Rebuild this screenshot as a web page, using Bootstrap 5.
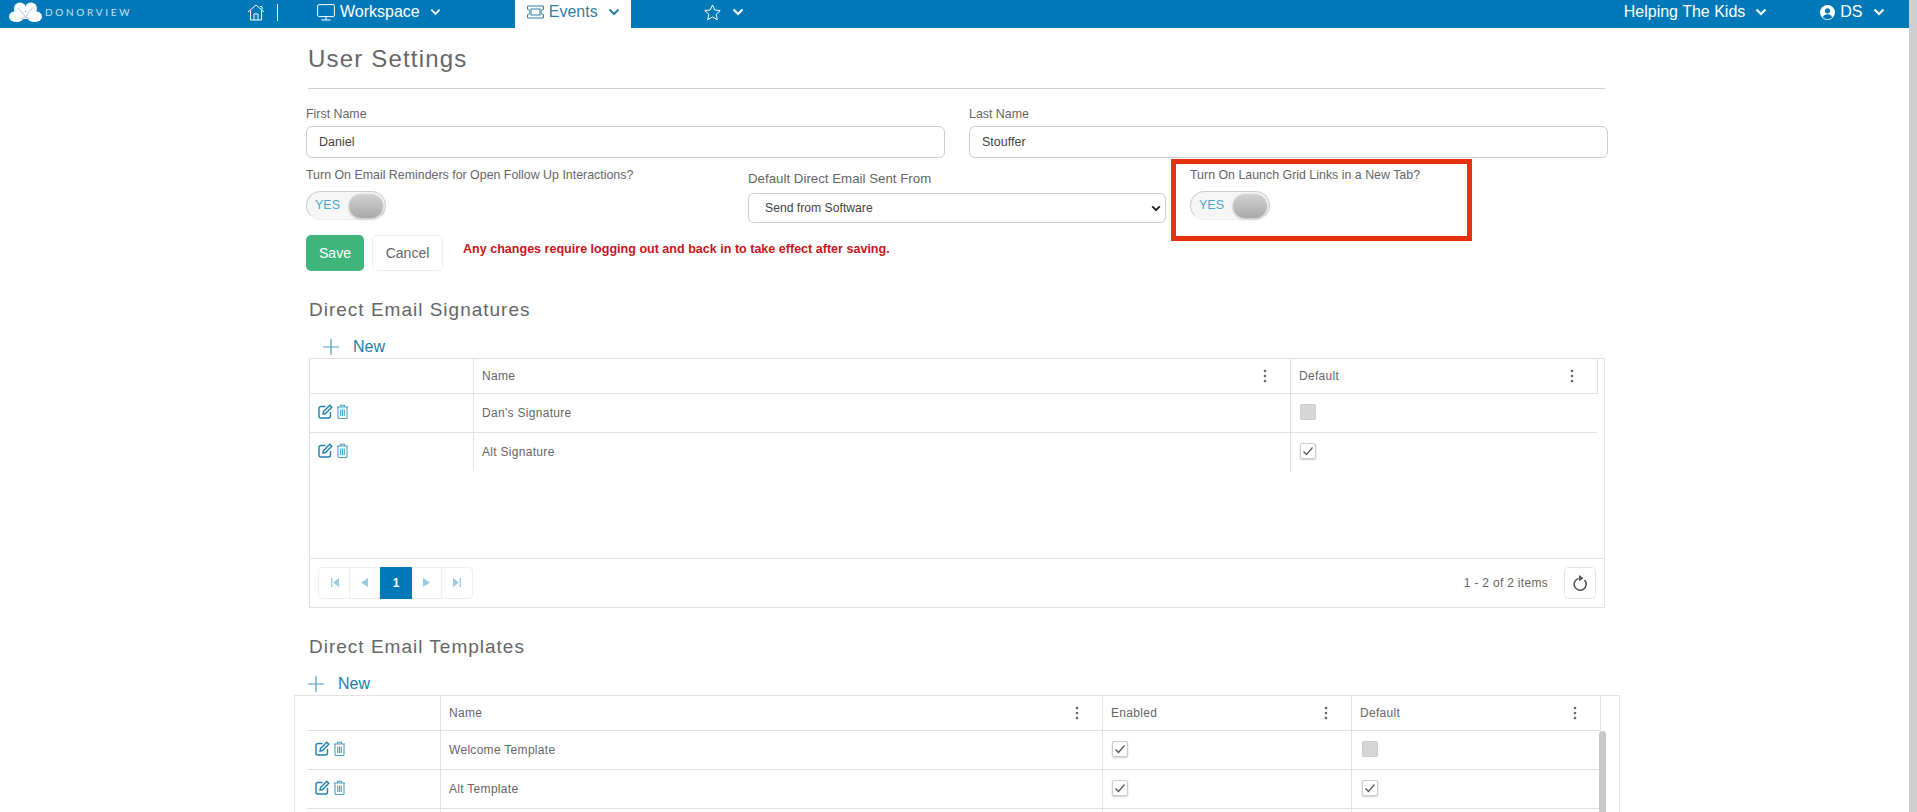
<!DOCTYPE html>
<html lang="en">

<head>
    <meta charset="UTF-8">
    <meta name="viewport" content="width=device-width, initial-scale=1.0">
    <title>User Settings</title>
    <link href="https://cdn.jsdelivr.net/npm/bootstrap@5.3.0/dist/css/bootstrap.min.css" rel="stylesheet">
    <style>
        html, body { height: 812px; overflow: hidden; }
        body { font-family: "Liberation Sans", Arial, sans-serif; color: #666; background: #fff; font-size: 12px; }
        .dv-wrap { width: 1909px; flex: none; }
        .dv-pagebar { width: 8px; height: 812px; background: #cfcfcf; flex: none; }

        /* top bar */
        .dv-bar { height: 28px; padding-bottom: 4px; background: #0179b8; color: #fff; font-size: 16px; white-space: nowrap; }
        .dv-bar svg { display: block; flex: none; }
        .dv-logo { margin-left: 9px; width: 238px; flex: none; }
        .dv-logo-text { font-family: Lato, sans-serif; font-size: 10px; letter-spacing: 2.7px; color: #c4e2f1; margin-left: 3px; }
        .dv-sep { width: 1px; height: 17px; background: #fff; margin-left: 12px; }
        .dv-item { height: 28px; gap: 5px; align-self: flex-start; padding-bottom: 4px; flex: none; }
        .dv-workspace { margin-left: 39px; margin-right: 74px; }
        .dv-events { background: #fff; color: #2f7fa8; width: 116px; padding-left: 12px; }
        .dv-star { margin-left: 73px; margin-right: 880px; gap: 11px; }
        .dv-kids { margin-right: 53px; }
        .dv-chev { margin-left: 5px; }

        /* page */
        .dv-page { margin-left: 306px; width: 1303px; }
        .dv-title { margin-left: 2px; width: 1297px; height: 61px; padding-top: 3px; border-bottom: 1px solid #d0d0d0; font-size: 24px; letter-spacing: 1.180px; font-weight: 400; color: #666; margin-bottom: 0; }
        .dv-section { margin-left: 3px; font-size: 19px; line-height: 24px; letter-spacing: 1px; color: #666; font-weight: 400; margin-bottom: 0; }
        .dv-label { font-size: 12.4px; line-height: 16px; color: #666; margin: 0; display: block; }
        .dv-names { display: grid; grid-template-columns: 639px 639px; gap: 24px; padding-top: 17px; }
        .dv-names .dv-label { margin-bottom: 4px; }
        .dv-input { height: 32px; font-size: 12.5px; color: #444; border: 1px solid #ccc; border-radius: 6px; padding: 0 12px; }
        .dv-opts { display: grid; grid-template-columns: 442px 442px 1fr; height: 77px; }
        .dv-opt1 { padding-top: 9px; }
        .dv-opt2 { padding-top: 13px; width: 418px; }
        .dv-opt2 .dv-label { margin-bottom: 6px; font-size: 13.3px; }
        .dv-select { height: 30px; font-size: 12.2px; color: #444; border: 1px solid #ccc; border-radius: 6px; padding: 0 30px 0 16px; background-image: url("data:image/svg+xml,%3csvg xmlns='http://www.w3.org/2000/svg' viewBox='0 0 12 8'%3e%3cpath d='M1.500 1.500 6 6l4.500-4.500' fill='none' stroke='%23222' stroke-width='2.400'/%3e%3c/svg%3e"); background-position: right 4px center; background-size: 10px 7px; }
        .dv-opt3 { position: relative; padding-top: 9px; }
        .dv-redbox { position: absolute; left: -19px; top: 1px; width: 301px; height: 82px; border: 5px solid #e5330f; pointer-events: none; }
        .dv-toggle { width: 80px; height: 29px; margin-top: 8px; border-radius: 15px; border: 1px solid #ccc; border-bottom-color: #eee; background: #f6f6f6; color: #45a9d0; font-size: 12.5px; padding: 0 2px 0 8px; }
        .dv-knob { width: 34px; height: 24px; border-radius: 12px; background: linear-gradient(#d2d2d2, #a9a9a9); box-shadow: 0 1px 3px rgba(0,0,0,.25); }
        .dv-actions { height: 36px; gap: 8px; }
        .dv-save { width: 58px; height: 36px; background: #3fb57b; color: #fff; border: 0; border-radius: 5px; font-size: 14px; padding: 0; }
        .dv-cancel { width: 71px; height: 36px; background: #fff; color: #666; border: 1px solid #eee; border-radius: 5px; font-size: 14px; padding: 0; }
        .dv-warn { color: #c8141b; font-weight: 700; font-size: 12.55px; line-height: 16px; margin: 6px 0 0 12px; }
        .dv-new { height: 24px; color: #1a7ea8; font-size: 16px; gap: 14px; margin-bottom: -1px; }
        .dv-new1 { margin-left: 17px; margin-top: 13px; }
        .dv-new2 { margin-left: 2px; margin-top: 13px; }
        .dv-mt1 { margin-top: 27px; }
        .dv-mt2 { margin-top: 27px; }

        /* grids */
        .dv-grid { border: 1px solid #e2e2e2; position: relative; }
        .dv-grid1 { margin-left: 3px; width: 1296px; height: 250px; }
        .dv-grid2 { margin-left: -12px; width: 1326px; height: 200px; padding-left: 12px; }
        .dv-tbl { table-layout: fixed; border-collapse: separate; border-spacing: 0; letter-spacing: .3px; }
        .dv-tbl th, .dv-tbl td { border-right: 1px solid #e2e2e2; border-bottom: 1px solid #e2e2e2; font-weight: 400; padding: 0 0 0 8px; color: #666; }
        .dv-tbl th { height: 35px; }
        .dv-tbl td { height: 39px; }
        .dv-tbl td:last-child { border-right: 0; }
        .dv-tbl .dv-last td { border-bottom: 0; height: 38px; }
        .dv-body1 { height: 164px; }
        .dv-tg1 { width: 1288px; }
        .dv-tb1 { width: 1287px; }
        .dv-tg2 { width: 1294px; }
        .dv-c1 { width: 164px; }
        .dv-c2 { width: 817px; }
        .dv-c3 { width: 307px; }
        .dv-tb1 .dv-c3 { width: 306px; }
        .dv-d1 { width: 134px; }
        .dv-d2 { width: 662px; }
        .dv-d3 { width: 249px; }
        .dv-d4 { width: 249px; }
        .dv-dots { margin-right: 23px; }
        .dv-acts { gap: 3px; margin-bottom: 3px; }
        .dv-check { width: 16px; height: 16px; border: 1px solid #ccc; border-radius: 2px; background: #fff; box-shadow: 0 1px 2px rgba(0,0,0,.2); margin: 0 0 3px 1px; }
        .dv-d4 .dv-check { margin-left: 2px; }
        .dv-check.dv-off { background: #d6d6d6; box-shadow: none; }
        .dv-foot { height: 48px; border-top: 1px solid #e2e2e2; padding: 8px; }
        .dv-pager { height: 32px; border: 1px solid #eee; border-radius: 4px; }
        .dv-pg { width: 30px; height: 32px; border-right: 1px solid #eee; }
        .dv-pg:first-child { width: 31px; }
        .dv-pg:last-child { border-right: 0; }
        .dv-pg.dv-on { background: #0179b8; color: #fff; font-weight: 700; width: 32px; border: 0; }
        .dv-count { font-size: 12px; letter-spacing: .3px; margin-right: 16px; }
        .dv-refresh { width: 32px; height: 32px; border: 1px solid #e6e6e6; border-radius: 4px; }
        .dv-scroll { position: absolute; left: 1304px; top: 35px; width: 7px; height: 170px; background: #c8c8c8; border-radius: 4px 4px 0 0; }
    </style>
</head>

<body class="d-flex">
    <svg width="0" height="0" class="position-absolute">
        <symbol id="i-chev" viewBox="0 0 12 8"><path d="M1.500 1.500 6 6l4.500-4.500" fill="none" stroke="currentColor" stroke-width="2"/></symbol>
        <symbol id="i-edit" viewBox="0 0 15 15"><path d="M7.500 2.500H3A2 2 0 0 0 1 4.500v7.500a2 2 0 0 0 2 2h7.500a2 2 0 0 0 2-2V8" fill="none" stroke="#1f82ad" stroke-width="1.400"/><path d="M5.500 7.500 11.800 1.200l2 2L7.500 9.500l-2.500.5z" fill="none" stroke="#1f82ad" stroke-width="1.400"/></symbol>
        <symbol id="i-trash" viewBox="0 0 13 15"><path d="M1 3h11M4.500 3V1.300h4V3M2 3v10.500a1 1 0 0 0 1 1h7a1 1 0 0 0 1-1V3M4.700 5.500v6.500M6.500 5.500v6.500M8.300 5.500v6.500" fill="none" stroke="#4d9fc3" stroke-width="1.100"/></symbol>
        <symbol id="i-plus" viewBox="0 0 16 16"><path d="M8 0v16M0 8h16" stroke="#4a9fc0" stroke-width="1.200"/></symbol>
        <symbol id="i-dots" viewBox="0 0 4 14"><circle cx="2" cy="2" r="1.300" fill="#666"/><circle cx="2" cy="7" r="1.300" fill="#666"/><circle cx="2" cy="12" r="1.300" fill="#666"/></symbol>
        <symbol id="i-tick" viewBox="0 0 14 14"><path d="M2.500 7.500 5.500 10.500 11.500 3.500" fill="none" stroke="#555" stroke-width="1.200"/></symbol>
    </svg>

    <div class="dv-wrap">
        <nav class="dv-bar d-flex align-items-center">
            <div class="dv-logo d-flex align-items-center">
                <svg width="33" height="20" viewBox="0 0 33 20">
                    <circle cx="11" cy="6.500" r="6" fill="#fff"/><circle cx="22" cy="6.500" r="6" fill="#fff"/>
                    <ellipse cx="7.500" cy="14.500" rx="7.500" ry="5.500" fill="#fff"/><ellipse cx="25.500" cy="14.500" rx="7.500" ry="5.500" fill="#fff"/>
                    <path d="M11 10h11v7H11z" fill="#fff"/>
                    <path d="M9 5.500 16.500 15 24 5.500M12 17l4.500-2 4.500 2" fill="none" stroke="#b9c9d2" stroke-width="1"/>
                </svg>
                <span class="dv-logo-text">DONORVIEW</span>
            </div>
            <svg width="18" height="18" viewBox="0 0 18 18"><path d="M1 9 9 2l8 7M3.500 7.500V17h11V7.500M7 17v-6h4v6M13 3.500h2v3" fill="none" stroke="#fff" stroke-width="1"/></svg>
            <span class="dv-sep"></span>
            <div class="dv-item dv-workspace d-flex align-items-center">
                <svg width="18" height="17" viewBox="0 0 18 17"><rect x=".6" y=".6" width="16.800" height="12" rx="1.500" fill="none" stroke="#fff" stroke-width="1"/><path d="M9 12.600v3M4.500 16h9" stroke="#fff" stroke-width="1"/></svg>
                <span>Workspace</span>
                <svg class="dv-chev" width="11" height="8"><use href="#i-chev"/></svg>
            </div>
            <div class="dv-item dv-events d-flex align-items-center">
                <svg width="17" height="14" viewBox="0 0 17 14"><path d="M.6 1h15.800v3.500a2.500 2.500 0 0 0 0 5V13H.6V9.500a2.500 2.500 0 0 0 0-5z" fill="none" stroke="#2f7fa8" stroke-width="1"/><rect x="4" y="4" width="9" height="6" fill="none" stroke="#2f7fa8" stroke-width="1"/></svg>
                <span>Events</span>
                <svg class="dv-chev" width="12" height="8"><use href="#i-chev"/></svg>
            </div>
            <div class="dv-item dv-star d-flex align-items-center">
                <svg width="17" height="17" viewBox="0 0 17 17"><path d="M8.500 1l2.300 5 5.400.6-4 3.700 1.100 5.400-4.800-2.700-4.800 2.700 1.100-5.400-4-3.700 5.400-.6z" fill="none" stroke="#fff" stroke-width="1"/></svg>
                <svg width="12" height="8"><use href="#i-chev"/></svg>
            </div>
            <div class="dv-item dv-kids d-flex align-items-center">
                <span>Helping The Kids</span>
                <svg class="dv-chev" width="12" height="8"><use href="#i-chev"/></svg>
            </div>
            <div class="dv-item d-flex align-items-center">
                <svg width="15" height="15" viewBox="0 0 15 15"><circle cx="7.500" cy="7.500" r="7.500" fill="#fff"/><circle cx="7.500" cy="5.800" r="2.600" fill="#0179b8"/><path d="M2.800 12.500c.8-2.200 2.500-3.200 4.700-3.200s3.900 1 4.700 3.200a7 7 0 0 1-9.400 0z" fill="#0179b8"/></svg>
                <span>DS</span>
                <svg class="dv-chev" width="12" height="8"><use href="#i-chev"/></svg>
            </div>
        </nav>

        <main class="dv-page">
            <h1 class="dv-title d-flex align-items-center">User Settings</h1>

            <div class="dv-names">
                <div>
                    <label class="dv-label" for="firstName">First Name</label>
                    <input id="firstName" class="form-control dv-input" value="Daniel">
                </div>
                <div>
                    <label class="dv-label" for="lastName">Last Name</label>
                    <input id="lastName" class="form-control dv-input" value="Stouffer">
                </div>
            </div>

            <div class="dv-opts">
                <div class="dv-opt1">
                    <span class="dv-label">Turn On Email Reminders for Open Follow Up Interactions?</span>
                    <div class="dv-toggle d-flex align-items-center justify-content-between"><span>YES</span><span class="dv-knob"></span></div>
                </div>
                <div class="dv-opt2">
                    <label class="dv-label" for="sentFrom">Default Direct Email Sent From</label>
                    <select id="sentFrom" class="form-select dv-select">
                        <option>Send from Software</option>
                    </select>
                </div>
                <div class="dv-opt3">
                    <span class="dv-label">Turn On Launch Grid Links in a New Tab?</span>
                    <div class="dv-toggle d-flex align-items-center justify-content-between"><span>YES</span><span class="dv-knob"></span></div>
                    <div class="dv-redbox"></div>
                </div>
            </div>

            <div class="dv-actions d-flex align-items-start">
                <button class="btn dv-save">Save</button>
                <button class="btn dv-cancel">Cancel</button>
                <span class="dv-warn">Any changes require logging out and back in to take effect after saving.</span>
            </div>

            <h2 class="dv-section dv-mt1">Direct Email Signatures</h2>
            <div class="dv-new dv-new1 d-flex align-items-center">
                <svg width="16" height="16"><use href="#i-plus"/></svg><span>New</span>
            </div>

            <div class="dv-grid dv-grid1">
                <table class="dv-tbl dv-tg1">
                    <thead>
                        <tr>
                            <th class="dv-c1"></th>
                            <th class="dv-c2"><div class="d-flex justify-content-between align-items-center">Name<svg class="dv-dots" width="4" height="14"><use href="#i-dots"/></svg></div></th>
                            <th class="dv-c3"><div class="d-flex justify-content-between align-items-center">Default<svg class="dv-dots" width="4" height="14"><use href="#i-dots"/></svg></div></th>
                        </tr>
                    </thead>
                </table>
                <div class="dv-body1">
                    <table class="dv-tbl dv-tb1">
                        <tbody>
                            <tr>
                                <td class="dv-c1"><div class="dv-acts d-flex align-items-center"><svg width="15" height="15"><use href="#i-edit"/></svg><svg width="13" height="15"><use href="#i-trash"/></svg></div></td>
                                <td class="dv-c2">Dan's Signature</td>
                                <td class="dv-c3"><span class="dv-check dv-off d-block"></span></td>
                            </tr>
                            <tr class="dv-last">
                                <td class="dv-c1"><div class="dv-acts d-flex align-items-center"><svg width="15" height="15"><use href="#i-edit"/></svg><svg width="13" height="15"><use href="#i-trash"/></svg></div></td>
                                <td class="dv-c2">Alt Signature</td>
                                <td class="dv-c3"><span class="dv-check d-flex align-items-center justify-content-center"><svg width="14" height="14"><use href="#i-tick"/></svg></span></td>
                            </tr>
                        </tbody>
                    </table>
                </div>
                <div class="dv-foot d-flex align-items-center justify-content-between">
                    <div class="dv-pager d-flex align-items-center">
                        <span class="dv-pg d-flex align-items-center justify-content-center"><svg width="9" height="9" viewBox="0 0 9 9"><path d="M1 0h1.300v9H1zM9 0v9L3 4.500z" fill="#9ccbe0"/></svg></span>
                        <span class="dv-pg d-flex align-items-center justify-content-center"><svg width="7" height="9" viewBox="0 0 7 9"><path d="M7 0v9L0 4.500z" fill="#9ccbe0"/></svg></span>
                        <span class="dv-pg dv-on d-flex align-items-center justify-content-center">1</span>
                        <span class="dv-pg d-flex align-items-center justify-content-center"><svg width="7" height="9" viewBox="0 0 7 9"><path d="M0 0v9l7-4.500z" fill="#9ccbe0"/></svg></span>
                        <span class="dv-pg d-flex align-items-center justify-content-center"><svg width="9" height="9" viewBox="0 0 9 9"><path d="M8 0H6.700v9H8zM0 0v9l6-4.500z" fill="#9ccbe0"/></svg></span>
                    </div>
                    <div class="d-flex align-items-center">
                        <span class="dv-count">1 - 2 of 2 items</span>
                        <span class="dv-refresh d-flex align-items-center justify-content-center">
                            <svg width="15" height="16" viewBox="0 0 15 16"><path d="M11.500 5A6 6 0 1 1 5.500 3.400" fill="none" stroke="#555" stroke-width="1.600"/><path d="M6 0l4.500 3.200-4.500 3z" fill="#555"/></svg>
                        </span>
                    </div>
                </div>
            </div>

            <h2 class="dv-section dv-mt2">Direct Email Templates</h2>
            <div class="dv-new dv-new2 d-flex align-items-center">
                <svg width="16" height="16"><use href="#i-plus"/></svg><span>New</span>
            </div>

            <div class="dv-grid dv-grid2">
                <table class="dv-tbl dv-tg2">
                    <thead>
                        <tr>
                            <th class="dv-d1"></th>
                            <th class="dv-d2"><div class="d-flex justify-content-between align-items-center">Name<svg class="dv-dots" width="4" height="14"><use href="#i-dots"/></svg></div></th>
                            <th class="dv-d3"><div class="d-flex justify-content-between align-items-center">Enabled<svg class="dv-dots" width="4" height="14"><use href="#i-dots"/></svg></div></th>
                            <th class="dv-d4"><div class="d-flex justify-content-between align-items-center">Default<svg class="dv-dots" width="4" height="14"><use href="#i-dots"/></svg></div></th>
                        </tr>
                    </thead>
                </table>
                <table class="dv-tbl dv-tg2">
                    <tbody>
                        <tr>
                            <td class="dv-d1"><div class="dv-acts d-flex align-items-center"><svg width="15" height="15"><use href="#i-edit"/></svg><svg width="13" height="15"><use href="#i-trash"/></svg></div></td>
                            <td class="dv-d2">Welcome Template</td>
                            <td class="dv-d3"><span class="dv-check d-flex align-items-center justify-content-center"><svg width="14" height="14"><use href="#i-tick"/></svg></span></td>
                            <td class="dv-d4"><span class="dv-check dv-off d-block"></span></td>
                        </tr>
                        <tr>
                            <td class="dv-d1"><div class="dv-acts d-flex align-items-center"><svg width="15" height="15"><use href="#i-edit"/></svg><svg width="13" height="15"><use href="#i-trash"/></svg></div></td>
                            <td class="dv-d2">Alt Template</td>
                            <td class="dv-d3"><span class="dv-check d-flex align-items-center justify-content-center"><svg width="14" height="14"><use href="#i-tick"/></svg></span></td>
                            <td class="dv-d4"><span class="dv-check d-flex align-items-center justify-content-center"><svg width="14" height="14"><use href="#i-tick"/></svg></span></td>
                        </tr>
                        <tr>
                            <td class="dv-d1"></td>
                            <td class="dv-d2"></td>
                            <td class="dv-d3"></td>
                            <td class="dv-d4"></td>
                        </tr>
                    </tbody>
                </table>
                <div class="dv-scroll"></div>
            </div>
        </main>
    </div>
    <div class="dv-pagebar"></div>

    <script src="https://cdn.jsdelivr.net/npm/bootstrap@5.3.0/dist/js/bootstrap.bundle.min.js"></script>
</body>

</html>
